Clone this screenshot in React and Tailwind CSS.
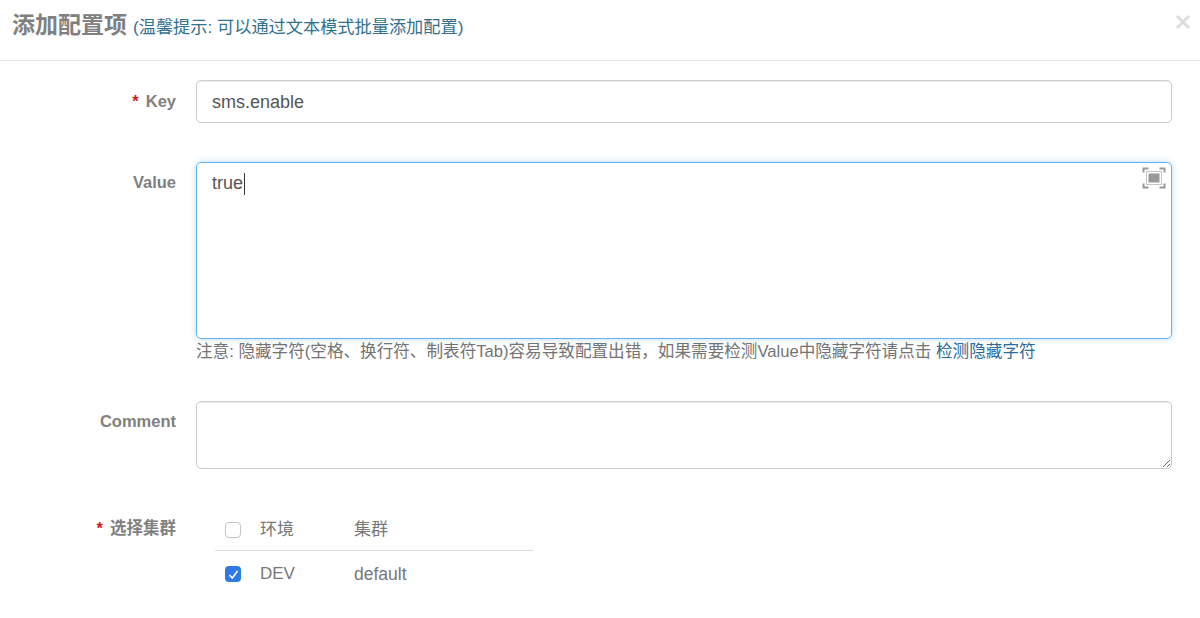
const font = { fontFamily: '"Liberation Sans", "Noto Sans CJK SC", sans-serif' };

function Label({ required, children, className = "" }) {
  return (
    <div className={`w-[176px] shrink-0 text-right text-[16.5px] leading-[24px] font-bold text-[#808080] ${className}`}>
      {required && <span className="text-[#d0191c] mr-[7px]">*</span>}
      {children}
    </div>
  );
}

function ExpandIcon() {
  return (
    <svg width="24" height="22" viewBox="0 0 24 22" fill="none" className="absolute right-[5px] top-[4px]">
      <path d="M1.5 5.5V1.5h5M17.5 1.5h5v4M1.5 16.5v4h5M17.5 20.5h5v-4" stroke="#999" strokeWidth="2" />
      <rect x="4.5" y="4.5" width="15" height="13" stroke="#c4c4c4" strokeWidth="1" />
      <rect x="6.5" y="6.5" width="11" height="9" fill="#999" />
    </svg>
  );
}

export default function App() {
  return (
    <div style={font} className="w-[1200px] h-[618px] overflow-hidden bg-white text-[#555]">
      <div className="h-[61px] border-b border-[#e5e5e5] pl-[12px] pr-[9px] flex items-start justify-between">
        <div className="flex items-baseline pt-[9px]">
          <span className="text-[23px] leading-[32px] font-bold text-[#808080]">添加配置项</span>
          <span className="ml-[6px] text-[17.2px] text-[#31708f]">(温馨提示: 可以通过文本模式批量添加配置)</span>
        </div>
        <svg width="16" height="16" viewBox="0 0 16 16" className="mt-[14px]" fill="none">
          <path d="M2 2l12 12M14 2L2 14" stroke="#dddddd" strokeWidth="3" />
        </svg>
      </div>

      <div className="flex mt-[19px]">
        <Label required className="pt-[9px]">Key</Label>
        <input
          readOnly
          value="sms.enable"
          className="ml-[20px] w-[976px] h-[43px] rounded-[5px] border border-[#ccc] px-[15px] pt-[2px] text-[18px] text-[#555] outline-none shadow-[inset_0_1px_1px_rgba(0,0,0,0.075)]"
        />
      </div>

      <div className="flex mt-[39px]">
        <Label className="pt-[8px]">Value</Label>
        <div className="ml-[20px] w-[976px]">
          <div className="relative h-[177px] rounded-[5px] border border-[#66afe9] px-[15px] pt-[7px] text-[18px] leading-[26px] text-[#555] shadow-[0_0_6px_rgba(102,175,233,0.45)]">
            true<span className="inline-block ml-[1px] w-px h-[22px] bg-[#333] align-middle" />
            <ExpandIcon />
          </div>
          <div className="mt-[1px] text-[16.6px] leading-[24px] text-[#737373]">
            注意: 隐藏字符(空格、换行符、制表符Tab)容易导致配置出错，如果需要检测Value中隐藏字符请点击{" "}
            <a className="text-[#2c6a9c]">检测隐藏字符</a>
          </div>
        </div>
      </div>

      <div className="flex mt-[37px]">
        <Label className="pt-[8px]">Comment</Label>
        <textarea
          readOnly
          className="block ml-[20px] w-[976px] h-[68px] rounded-[5px] border border-[#ccc] outline-none shadow-[inset_0_1px_1px_rgba(0,0,0,0.075)]"
        />
      </div>

      <div className="flex mt-[46px]">
        <Label required className="pt-[1px]">选择集群</Label>
        <div className="ml-[39px] w-[318px] text-[17px] text-[#777]">
          <div className="h-[36px] flex items-start border-b border-[#ddd] pl-[10px]">
            <span className="mt-[7px] w-[16px] h-[16px] rounded-[4px] border border-[#c4c4c4] bg-white" />
            <span className="ml-[19px] w-[94px] leading-[24px] pt-[3px]">环境</span>
            <span className="leading-[24px] pt-[3px]">集群</span>
          </div>
          <div className="h-[46px] flex items-center pl-[10px]">
            <span className="w-[16px] h-[16px] rounded-[4px] bg-[#2f7be6] flex items-center justify-center">
              <svg width="11" height="11" viewBox="0 0 11 11" fill="none">
                <path d="M1.5 6l2.8 3L9.5 2" stroke="#fff" strokeWidth="1.5" />
              </svg>
            </span>
            <span className="ml-[19px] w-[94px]">DEV</span>
            <span className="text-[17.5px]">default</span>
          </div>
        </div>
      </div>
    </div>
  );
}
